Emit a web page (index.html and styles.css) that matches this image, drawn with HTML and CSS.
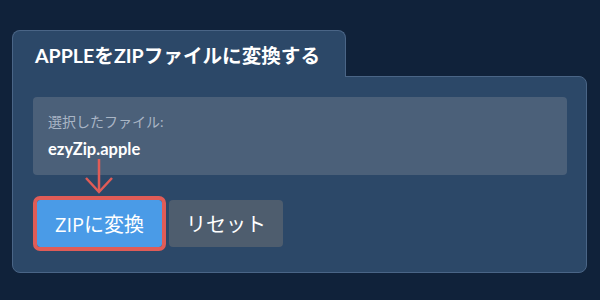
FILE: index.html
```html
<!DOCTYPE html>
<html lang="ja">
<head>
<meta charset="utf-8">
<title>APPLEをZIPファイルに変換する</title>
<link rel="stylesheet" href="styles.css">
</head>
<body>
<div class="widget">
  <div class="tab"><h1 class="title">APPLEをZIPファイルに変換する</h1></div>
  <div class="panel">
    <div class="file-box">
      <div class="file-label">選択したファイル:</div>
      <div class="file-name">ezyZip.apple</div>
    </div>
    <div class="actions">
      <button class="btn btn-convert">ZIPに変換
        <svg class="arrow" width="30" height="36" viewBox="0 0 30 36" aria-hidden="true">
          <path d="M15 0 V33" stroke="#e05c57" stroke-width="2.5" fill="none"/>
          <path d="M2 19 L15 33 L28 19" stroke="#e05c57" stroke-width="2.5" fill="none" stroke-linejoin="miter"/>
        </svg>
      </button>
      <button class="btn btn-reset">リセット</button>
    </div>
  </div>
</div>
</body>
</html>
```

FILE: styles.css
```css
html, body {
  margin: 0;
  padding: 0;
}
body {
  background: #10223a;
  width: 600px;
  height: 300px;
  font-family: Lato, "Noto Sans CJK JP", sans-serif;
}
.widget {
  padding: 30px 0 0 12px;
}
.tab {
  position: relative;
  z-index: 1;
  width: 334px;
  height: 47px;
  box-sizing: border-box;
  background: #2c4868;
  border: 1px solid #4a6586;
  border-bottom: none;
  border-radius: 8px 8px 0 0;
  margin-bottom: -1px;
}
.title {
  margin: 0;
  padding: 12px 0 0 22px;
  font-size: 19.6px;
  font-weight: 700;
  line-height: 26px;
  color: #ffffff;
  white-space: nowrap;
}
.panel {
  width: 575px;
  height: 197px;
  box-sizing: border-box;
  background: #2c4868;
  border: 1px solid #4a6586;
  border-radius: 0 8px 8px 8px;
  padding: 20px 19px 0 20px;
}
.file-box {
  background: #4b6079;
  border-radius: 4px;
  height: 78px;
  box-sizing: border-box;
  padding: 15px 15px 0 15px;
}
.file-label {
  font-size: 14px;
  line-height: 20px;
  color: #a9b5c5;
}
.file-name {
  margin-top: 7px;
  font-size: 16.5px;
  font-weight: 700;
  line-height: 20px;
  color: #ffffff;
}
.actions {
  display: flex;
  gap: 7px;
  margin: 25px 0 0 4px;
}
.btn {
  position: relative;
  height: 47px;
  border: none;
  border-radius: 4px;
  color: #ffffff;
  font-family: "Open Sans", "Noto Sans CJK JP", sans-serif;
  font-size: 20px;
  padding: 0;
  cursor: pointer;
}
.btn-convert {
  width: 125px;
  background: #4a9be7;
  outline: 4px solid #e05c57;
  border-radius: 3px;
}
.btn-reset {
  width: 114px;
  background: #4e5d6e;
}
.arrow {
  position: absolute;
  left: 47px;
  top: -41px;
}
```
